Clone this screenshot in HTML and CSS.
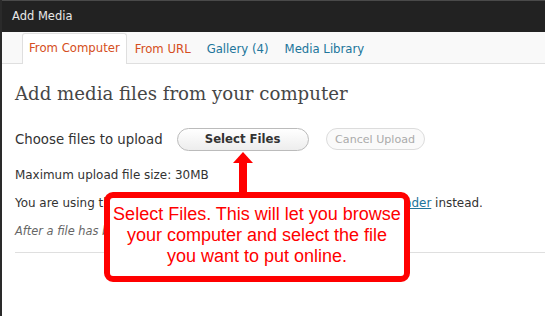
FILE: index.html
```html
<!DOCTYPE html>
<html lang="en">
<head>
    <meta charset="UTF-8">
    <title>Add Media</title>
    <link rel="stylesheet" href="styles.css">
</head>
<body>
    <div class="modal">
        <div class="modal-title">Add Media</div>
        <ul class="tabs">
            <li class="tab current">From Computer</li>
            <li class="tab orange">From URL</li>
            <li class="tab">Gallery (4)</li>
            <li class="tab">Media Library</li>
        </ul>
        <div class="content">
            <h3 class="media-title">Add media files from your computer</h3>
            <div class="upload-row">
                <span class="upload-label">Choose files to upload</span>
                <button type="button" class="btn-select">Select Files</button>
                <button type="button" class="btn-cancel" disabled>Cancel Upload</button>
            </div>
            <p class="info first">Maximum upload file size: 30MB</p>
            <p class="info">You are using the Flash uploader. Problems? Try the <a href="#">Browser uploader</a> instead.</p>
            <p class="info note">After a file has been uploaded, you can add titles and descriptions.</p>
            <hr class="divider">

            <div class="callout">
                <div class="arrow"></div>
                Select Files. This will let you browse<br>
                your computer and select the file<br>
                you want to put online.
            </div>
        </div>
    </div>
</body>
</html>
```

FILE: styles.css
```css
body {
    margin: 0;
    background: #fff;
    font-family: "DejaVu Sans", Verdana, sans-serif;
    font-size: 11.95px;
    color: #333;
    overflow: hidden;
}
.modal {
    border-left: 2px solid #2a2a2a;
    height: 316px;
    box-sizing: border-box;
}
.modal-title {
    height: 31px;
    line-height: 30px;
    background: #222;
    border-top: 1px solid #4a4a4a;
    color: #e8e8e8;
    padding-left: 10px;
    font-size: 11.5px;
}
.tabs {
    list-style: none;
    margin: 0;
    padding: 2px 0 0 20px;
    height: 29px;
    background: #f9f9f9;
    border-bottom: 1px solid #dfdfdf;
    display: flex;
    align-items: flex-end;
    font-size: 11.7px;
}
.tab {
    color: #21759b;
    padding: 0 7px;
    height: 29px;
    line-height: 29px;
    border: 1px solid transparent;
    border-bottom: none;
    margin-bottom: -1px;
}
.tab.current {
    background: #fff;
    border-color: #dfdfdf;
    border-radius: 3px 3px 0 0;
    color: #d54e21;
    height: 30px;
    padding: 0 6px;
}
.tab.orange {
    color: #d54e21;
}
.content {
    position: relative;
    padding: 0 0 0 13px;
}
.media-title {
    font-family: "DejaVu Serif", Georgia, serif;
    font-weight: normal;
    font-size: 18.15px;
    color: #464646;
    margin: 0;
    padding: 19px 0 0;
    height: 40px;
}
.upload-row {
    display: flex;
    align-items: center;
    height: 24px;
    margin-top: 4px;
}
.upload-label {
    font-size: 13.3px;
}
.btn-select {
    margin-left: 14px;
    width: 132px;
    height: 23px;
    border: 1px solid #bbb;
    border-radius: 12px;
    background: linear-gradient(#fff, #ededed);
    font-family: "DejaVu Sans", Verdana, sans-serif;
    font-size: 11.7px;
    font-weight: bold;
    color: #333;
    padding: 0;
}
.btn-cancel {
    margin-left: 17px;
    width: 99px;
    height: 22px;
    border: 1px solid #dcdcdc;
    border-radius: 11px;
    background: #fafafa;
    font-family: "DejaVu Sans", Verdana, sans-serif;
    font-size: 11.1px;
    color: #aaa;
    padding: 0;
}
.info {
    margin: 12px 0 0;
    line-height: 16px;
    white-space: nowrap;
}
.info.first {
    margin-top: 16px;
}
.info a {
    color: #21759b;
}
.note {
    font-style: italic;
    font-size: 11.4px;
    color: #666;
}
.divider {
    border: none;
    border-top: 1px solid #dfdfdf;
    margin: 13px 0 0;
}
.callout {
    position: absolute;
    left: 102px;
    top: 128px;
    width: 306px;
    height: 90px;
    box-sizing: border-box;
    border: 6px solid #f00;
    border-radius: 9px;
    background: #fff;
    color: #f00;
    font-family: "Liberation Sans", Arial, sans-serif;
    font-size: 18px;
    line-height: 21px;
    text-align: center;
    white-space: nowrap;
    padding: 6px 0 0;
}
.arrow {
    position: absolute;
    left: 129px;
    top: -35px;
    width: 8px;
    height: 35px;
    background: #f00;
}
.arrow::before {
    content: "";
    position: absolute;
    left: -6px;
    top: -11px;
    border-left: 10px solid transparent;
    border-right: 10px solid transparent;
    border-bottom: 11px solid #f00;
}
```
